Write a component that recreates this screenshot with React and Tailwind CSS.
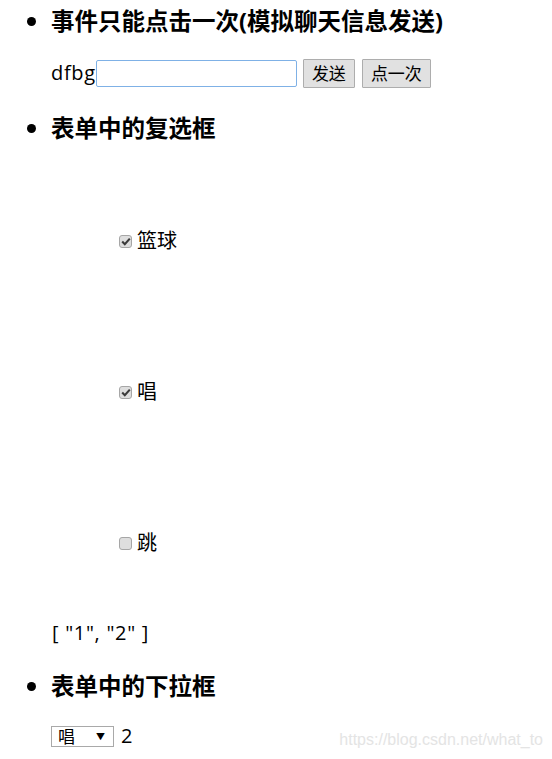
import React, { useState } from "react";

const font = { fontFamily: '"Open Sans", "Noto Sans CJK SC", sans-serif' };

const Box = ({ checked }) => (
  <span className="w-[13px] h-[13px] rounded-[3px] border border-[#a6a6a6] bg-[#dedede] flex items-center justify-center shrink-0">
    {checked && (
      <svg width="10" height="9" viewBox="0 0 10 9">
        <path d="M1.2 4.6 L3.8 7.2 L8.8 1.6" fill="none" stroke="#3b3b3b" strokeWidth="2.1" />
      </svg>
    )}
  </span>
);

const Check = ({ label, checked, mt }) => (
  <div className={`flex items-center h-[30px] pl-[68px] gap-[5px] ${mt}`}>
    <Box checked={checked} />
    <span className="text-[20px] text-black">{label}</span>
  </div>
);

export default function App() {
  const [text, setText] = useState("");
  return (
    <div className="relative w-[552px] h-[759px] bg-white overflow-hidden text-black" style={font}>
      <ul className="list-disc pl-[51px] m-0 text-[24px] leading-[30px]">
        <li className="pt-[6px]">
          <h3 className="text-[23.5px] font-bold leading-[30px] m-0">事件只能点击一次(模拟聊天信息发送)</h3>
          <div className="flex items-center h-[30px] mt-[22px] text-[20px]">
            <span className="tracking-[0.7px]">dfbg</span>
            <input
              value={text}
              onChange={(e) => setText(e.target.value)}
              className="w-[201px] h-[27px] border border-[#7fb1e6] rounded-[2px] outline-none px-1 text-[17px]"
            />
            <button className="ml-[6px] w-[52px] h-[29px] border border-[#adadad] bg-[#e1e1e1] text-[17px] leading-none rounded-[1px]">发送</button>
            <button className="ml-[7px] w-[69px] h-[29px] border border-[#adadad] bg-[#e1e1e1] text-[17px] leading-none rounded-[1px]">点一次</button>
          </div>
        </li>
        <li className="mt-[25px]">
          <h3 className="text-[23.5px] font-bold leading-[30px] m-0">表单中的复选框</h3>
          <Check label="篮球" checked mt="mt-[83px]" />
          <Check label="唱" checked mt="mt-[121px]" />
          <Check label="跳" mt="mt-[121px]" />
          <div className="mt-[60px] h-[30px] leading-[30px] text-[20px] pl-[1px] tracking-[0.7px]">[ "1", "2" ]</div>
        </li>
        <li className="mt-[23px]">
          <h3 className="text-[23.5px] font-bold leading-[30px] m-0">表单中的下拉框</h3>
          <div className="flex items-center h-[30px] mt-[20px] gap-[7px]">
            <div className="w-[63px] h-[21px] border border-[#a9a9a9] flex items-center justify-between pl-[6px] pr-[8px]">
              <span className="text-[17px] leading-none">唱</span>
              <span className="text-[9px] leading-none">▼</span>
            </div>
            <span className="text-[20px]">2</span>
          </div>
        </li>
      </ul>
      <div className="absolute right-[9px] top-[728px] text-[16px] text-[#e4e4e4]" style={{ fontFamily: '"Liberation Sans", sans-serif' }}>
        https://blog.csdn.net/what_to
      </div>
    </div>
  );
}
